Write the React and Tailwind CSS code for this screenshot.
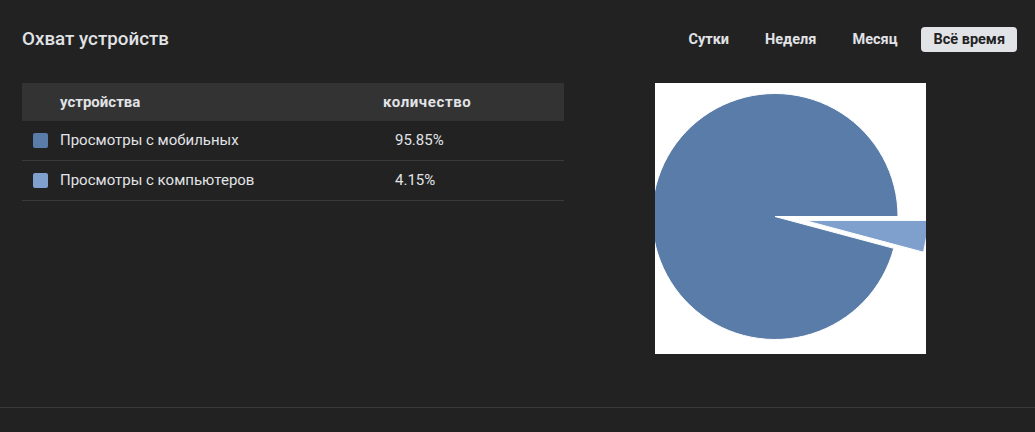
import React, { useState } from 'react';

const PERIODS = ['Сутки', 'Неделя', 'Месяц', 'Всё время'];

const ROWS = [
    { label: 'Просмотры с мобильных', value: '95.85%', color: 'bg-[#5a7ca8]' },
    { label: 'Просмотры с компьютеров', value: '4.15%', color: 'bg-[#7fa0cc]' },
];

function PieChart() {
    // главный сектор 15°..360°, маленький выдвинут по биссектрисе 7.5°
    return (
        <svg width="271" height="271" viewBox="0 0 271 271" className="block bg-white">
            <path d="M120,133.5 L238.81,165.33 A123,123 0 1 1 243,133.5 Z" fill="#5a7ca8" stroke="#ffffff" strokeWidth="1" />
            <path d="M149.7,137.4 L272.7,137.4 A123,123 0 0 1 268.51,169.23 Z" fill="#7fa0cc" stroke="#ffffff" strokeWidth="1" />
        </svg>
    );
}

export default function App() {
    const [period, setPeriod] = useState('Всё время');

    return (
        <div className="w-[1035px] h-[432px] bg-[#222222] font-['Roboto',sans-serif] text-[#e1e3e6] overflow-hidden">
            <div className="h-[408px] border-b border-[#3a3a3a] pl-[22px] pr-[18px]">
                <div className="flex items-center justify-between pt-[27px]">
                    <h2 className="text-[18.8px] font-medium leading-[25px]">Охват устройств</h2>
                    <div className="flex items-center gap-[12px]">
                        {PERIODS.map(p => (
                            <button
                                key={p}
                                onClick={() => setPeriod(p)}
                                className={`h-[25px] px-[12px] rounded-[4px] text-[14.5px] font-bold leading-[25px] ${p === period ? 'bg-[#e1e3e6] text-[#222222]' : 'text-[#e1e3e6]'}`}
                            >
                                {p}
                            </button>
                        ))}
                    </div>
                </div>

                <div className="flex mt-[31px]">
                    <div className="w-[542px]">
                        <div className="flex items-center h-[38px] bg-[#333333] text-[15px] font-bold">
                            <div className="pl-[38px] w-[361px]">устройства</div>
                            <div className="tracking-[0.6px]">количество</div>
                        </div>
                        {ROWS.map(r => (
                            <div key={r.label} className="flex items-center h-[40px] border-b border-[#3a3a3a] text-[15px]">
                                <span className={`ml-[11px] w-[15px] h-[15px] rounded-[2px] ${r.color}`}></span>
                                <div className="pl-[12px] w-[335px]">{r.label}</div>
                                <div className="pl-[12px]">{r.value}</div>
                            </div>
                        ))}
                    </div>
                    <div className="flex-1 flex justify-center">
                        <PieChart />
                    </div>
                </div>
            </div>
        </div>
    );
}
